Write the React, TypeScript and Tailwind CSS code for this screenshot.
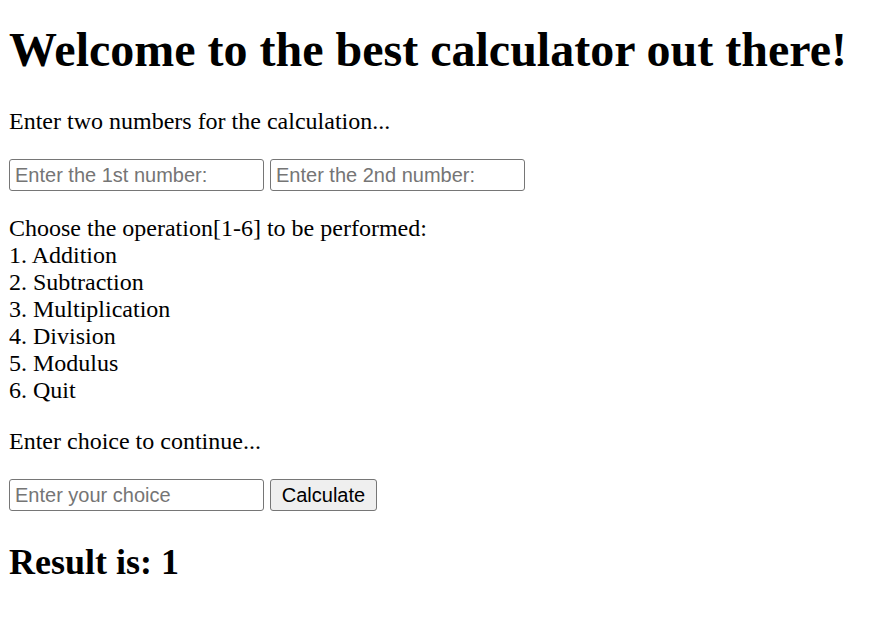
import { useState } from 'react';

export default function App() {
  const [first, setFirst] = useState('');
  const [second, setSecond] = useState('');
  const [choice, setChoice] = useState('');
  const [result] = useState(1);

  const inputCls =
    "h-[32px] w-[255px] rounded-[3px] border border-[#767676] bg-white pl-[5px] text-[20px] text-black placeholder:text-[#757575] [font-family:'Liberation_Sans',Arial,sans-serif] outline-none";

  return (
    <div className="min-h-screen bg-white pl-[9px] text-black [font-family:'Liberation_Serif','Times_New_Roman',serif]">
      <h1 className="pt-[22px] text-[48px] font-bold leading-[55px]">
        Welcome to the best calculator out there!
      </h1>
      <p className="mt-[31px] text-[24px] leading-[27px]">Enter two numbers for the calculation...</p>
      <div className="mt-[24px] flex gap-[6px]">
        <input
          className={inputCls}
          placeholder="Enter the 1st number:"
          value={first}
          onChange={e => setFirst(e.target.value)}
        />
        <input
          className={inputCls}
          placeholder="Enter the 2nd number:"
          value={second}
          onChange={e => setSecond(e.target.value)}
        />
      </div>
      <div className="mt-[24px] text-[24px] leading-[27px]">
        <div>Choose the operation[1-6] to be performed:</div>
        <div>1. Addition</div>
        <div>2. Subtraction</div>
        <div>3. Multiplication</div>
        <div>4. Division</div>
        <div>5. Modulus</div>
        <div>6. Quit</div>
      </div>
      <p className="mt-[24px] text-[24px] leading-[27px]">Enter choice to continue...</p>
      <div className="mt-[24px] flex gap-[6px]">
        <input
          className={inputCls}
          placeholder="Enter your choice"
          value={choice}
          onChange={e => setChoice(e.target.value)}
        />
        <button className="h-[32px] w-[107px] rounded-[3px] border border-[#767676] bg-[#efefef] text-[20px] text-black [font-family:'Liberation_Sans',Arial,sans-serif]">
          Calculate
        </button>
      </div>
      <h2 className="mt-[31px] text-[36px] font-bold leading-[41px]">Result is: {result}</h2>
    </div>
  );
}
